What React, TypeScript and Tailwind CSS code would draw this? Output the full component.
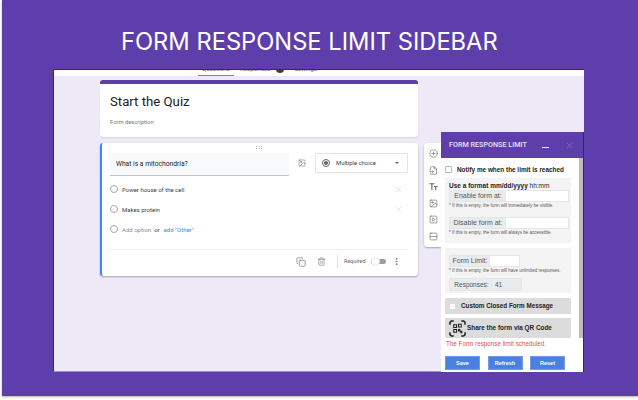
import { Copy, FileInput, Image, MoreVertical, CirclePlus, Rows2, SquarePlay, Trash2, X } from 'lucide-react';

function Radio() {
  return <span className="h-[8px] w-[8px] shrink-0 rounded-full border border-[#a8a8a8] bg-white" />;
}

function OptionRow({ label }: { label: string }) {
  return (
    <div className="flex h-[20px] items-center gap-[4px]">
      <Radio />
      <span className="text-[6px] text-[#3c4043]">{label}</span>
      <X className="ml-auto mr-[5px] h-[9px] w-[9px] text-[#c4c4c4]" strokeWidth={1.2} />
    </div>
  );
}

function DragDots() {
  return (
    <svg viewBox="0 0 6 3" className="absolute left-[154px] top-[3px] h-[3px] w-[6px]" fill="#b5b5b5">
      <path d="M0 0h1v1H0zM2.500 0h1v1h-1zM5 0h1v1H5zM0 2h1v1H0zM2.500 2h1v1h-1zM5 2h1v1H5z" />
    </svg>
  );
}

function FormCards() {
  return (
    <div className="ml-[46px] flex w-[318px] flex-col gap-[6px] font-['Roboto',sans-serif]">
      <div className="h-[57px] overflow-hidden rounded-[3px] border-t-[4px] border-[#5e3eab] bg-white pl-[10px] pt-[9px] shadow-[0_1px_1px_rgba(0,0,0,0.1)]">
        <div className="text-[13.200px] leading-[18px] text-[#202124]">Start the Quiz</div>
        <div className="mt-[7px] text-[5.800px] leading-[8px] text-[#70757a]">Form description</div>
      </div>
      <div className="relative h-[133px] rounded-[3px] border-l-[2px] border-[#4285f4] bg-white pl-[8px] pr-[10px] pt-[10px] shadow-[0_1px_2px_rgba(0,0,0,0.3)]">
        <DragDots />
        <div className="flex items-start">
          <div className="flex h-[23px] w-[179px] items-center border-b border-[#c4c6ca] bg-[#f8f9fa] pl-[6px] text-[6.700px] text-[#202124]">What is a mitochondria?</div>
          <Image className="ml-[9px] mt-[6px] h-[8px] w-[8px] text-[#5f6368]" strokeWidth={1.5} />
          <div className="ml-[9px] flex h-[20px] w-[93px] items-center rounded-[1px] border border-[#e4e4e4] pl-[6px] pr-[8px] text-[5.900px] text-[#3c4043]">
            <span className="flex h-[8px] w-[8px] items-center justify-center rounded-full border border-[#5f6368]">
              <span className="h-[4px] w-[4px] rounded-full bg-[#5f6368]" />
            </span>
            <span className="ml-[6px]">Multiple choice</span>
            <span className="ml-auto h-0 w-0 border-x-[2px] border-t-[2px] border-x-transparent border-t-[#5f6368]" />
          </div>
        </div>
        <div className="mt-[3px]">
          <OptionRow label="Power house of the cell" />
          <OptionRow label="Makes protein" />
          <div className="flex h-[20px] items-center gap-[3px] text-[6px]">
            <span className="mr-[1px] flex"><Radio /></span>
            <span className="text-[#8a8d91]">Add option</span>
            <span className="text-[#3c4043]">or</span>
            <span className="ml-[1px] text-[#4285f4]">add "Other"</span>
          </div>
        </div>
        <div className="mt-[10px] flex h-[24px] items-center border-t border-[#eeeeee]">
          <Copy className="ml-[186px] h-[10px] w-[10px] text-[#5f6368]" strokeWidth={1.4} />
          <Trash2 className="ml-[11px] h-[9px] w-[9px] text-[#5f6368]" strokeWidth={1.4} />
          <span className="ml-[11px] h-[13px] w-px bg-[#e2e2e2]" />
          <span className="ml-[6px] text-[5.500px] text-[#5f6368]">Required</span>
          <span className="relative ml-[5px] h-[5px] w-[15px] rounded-full bg-[#9e9e9e]">
            <span className="absolute left-0 top-[-2px] h-[9px] w-[9px] rounded-full border border-[#e4e4e4] bg-white" />
          </span>
          <MoreVertical className="ml-[6px] h-[9px] w-[9px] text-[#5f6368]" strokeWidth={2} />
        </div>
      </div>
    </div>
  );
}

function TitleIcon() {
  return (
    <svg viewBox="0 0 10 10" className="h-[9px] w-[9px]" fill="none" stroke="#5f6368" strokeWidth="1.200">
      <path d="M0.500 2H6M3.200 2v7M5.500 5h4M7.500 5v4" />
    </svg>
  );
}

function ToolRail() {
  return (
    <div className="absolute left-[370px] top-[73px] flex h-[104px] w-[18px] flex-col items-center justify-between rounded-l-[3px] bg-white py-[6px] shadow-[0_1px_2px_rgba(0,0,0,0.3)]">
      <CirclePlus className="h-[9px] w-[9px] text-[#5f6368]" strokeWidth={1.6} />
      <FileInput className="h-[9px] w-[9px] text-[#5f6368]" strokeWidth={1.6} />
      <TitleIcon />
      <Image className="h-[9px] w-[9px] text-[#5f6368]" strokeWidth={1.6} />
      <SquarePlay className="h-[9px] w-[9px] text-[#5f6368]" strokeWidth={1.6} />
      <Rows2 className="h-[9px] w-[9px] text-[#5f6368]" strokeWidth={1.6} />
    </div>
  );
}

function InputRow({ label, width, inputWidth }: { label: string; width: string; inputWidth: string }) {
  return (
    <div className={`flex h-[12px] border border-[#e6e6e6] ${width}`}>
      <span className="flex w-full items-center justify-center bg-[#e9ecef] text-[7px] text-[#555555]">{label}</span>
      <span className={`shrink-0 bg-white ${inputWidth}`} />
    </div>
  );
}

function Note({ text }: { text: string }) {
  return <p className="whitespace-nowrap text-[4.500px] leading-[6px] text-[#555555]">{text}</p>;
}

function QrMark() {
  return (
    <svg viewBox="0 0 18 18" className="h-[17px] w-[17px] shrink-0" fill="none" stroke="#222222" strokeWidth="1.100">
      <path d="M1 5V2.500L2.500 1H5M13 1h2.500L17 2.500V5M17 13v2.500L15.500 17H13M5 17H2.500L1 15.500V13" strokeWidth="1.600" />
      <path d="M5 5h3v3H5zM10 4.500h3v3h-3zM5 10h3v3H5zM10 10h1.500v1.500H10zM12.500 12h1v1.500h-1z" />
    </svg>
  );
}

function Sidebar() {
  return (
    <div className="absolute left-[387px] top-[62px] h-[240px] w-[143px] overflow-hidden border-r border-[#4a148c] bg-white font-['Liberation_Sans',sans-serif]">
      <div className="flex h-[26px] items-center bg-[#5e3eab] pl-[8px] font-['Roboto',sans-serif] text-[7.200px] font-medium text-[#e8e4f4]">
        <span className="w-[78px] whitespace-nowrap">FORM RESPONSE LIMIT</span>
        <span className="ml-[15px] mt-[5px] h-px w-[7px] bg-white" />
        <X className="ml-[16px] h-[9px] w-[9px] text-[#7a68a8]" strokeWidth={2.500} />
      </div>
      <div className="absolute right-0 top-[26px] h-[180px] w-[4px] bg-[#bdbdbd]" />
      <div className="pl-[4px] pr-[12px] pt-[8px]">
        <div className="flex items-center gap-[5px] whitespace-nowrap text-[6.400px] font-bold leading-[7px] text-[#222222]">
          <span className="h-[7px] w-[7px] rounded-[1px] border border-[#a9bce0] bg-white" />
          Notify me when the limit is reached
        </div>
        <div className="mt-[5px] h-[65px] bg-[#f5f4f5] px-[4px] pt-[4px]">
          <div className="whitespace-nowrap text-[6.500px] font-bold leading-[7px] text-[#222222]">
            Use a format mm/dd/yyyy <span className="font-normal">hh:mm</span>
          </div>
          <div className="mt-[1px]">
            <InputRow label="Enable form at:" width="w-[120px]" inputWidth="w-[62px]" />
          </div>
          <div className="mt-[1px]"><Note text="* If this is empty, the form will immediately be visible." /></div>
          <div className="mt-[8px]">
            <InputRow label="Disable form at:" width="w-[120px]" inputWidth="w-[62px]" />
          </div>
          <div className="mt-[1px]"><Note text="* If this is empty, the form will always be accessible." /></div>
        </div>
        <div className="mt-[5px] h-[45px] bg-[#f5f4f5] px-[4px] pt-[7px]">
          <InputRow label="Form Limit:" width="w-[71px]" inputWidth="w-[29px]" />
          <div className="mt-[1px]"><Note text="* If this is empty, the form will have unlimited responses." /></div>
          <div className="mt-[4px] flex h-[13px] w-[73px] border border-[#e6e6e6] bg-[#e9ecef] text-[6.500px] text-[#555555]">
            <span className="flex w-[44px] items-center justify-center border-r border-[#f5f4f5]">Responses:</span>
            <span className="flex items-center pl-[1px]">41</span>
          </div>
        </div>
        <div className="mt-[5px] flex h-[16px] items-center gap-[6px] whitespace-nowrap rounded-[1px] bg-[#dcdcdc] pl-[5px] text-[6.300px] font-bold text-[#222222]">
          <span className="h-[5px] w-[5px] bg-white" />
          Custom Closed Form Message
        </div>
        <div className="mt-[4px] flex h-[20px] items-center gap-px whitespace-nowrap rounded-[1px] bg-[#dcdcdc] pl-[4px] text-[6.400px] font-bold text-[#222222]">
          <QrMark />
          Share the form via QR Code
        </div>
        <div className="mt-[1px] whitespace-nowrap pl-px text-[6.300px] leading-[9px] text-[#d9534f]">The Form response limit scheduled.</div>
        <div className="mt-[8px] flex w-[120px] justify-between">
          {['Save', 'Refresh', 'Reset'].map(label => (
            <span key={label} className="flex h-[14px] w-[35px] items-center justify-center border border-[#6f9be8] bg-[#4a80e0] text-[5.500px] font-bold text-white">{label}</span>
          ))}
        </div>
      </div>
    </div>
  );
}

function TabBar() {
  return (
    <div className="flex h-[6px] overflow-hidden bg-white pl-[144px] font-['Roboto',sans-serif] text-[6.200px] leading-[8px] text-[#5f6368]">
      <div className="flex h-[6px] w-[36px] justify-center border-b border-[#8a7bb8]">
        <span className="mt-[-5px]">Questions</span>
      </div>
      <span className="ml-[6px] mt-[-5px]">Responses</span>
      <span className="ml-[6px] mt-[-5px] h-[8px] w-[8px] rounded-full bg-[#3c4043]" />
      <span className="ml-[10px] mt-[-5px]">Settings</span>
    </div>
  );
}

export default function App() {
  return (
    <div className="h-[400px] w-[638px] overflow-hidden bg-white pl-[2px]">
      <div className="h-[396px] bg-[#5e3eab] pt-[28px] shadow-[0_1px_2px_rgba(0,0,0,0.3)]">
        <h1 className="ml-[119px] h-[41px] whitespace-nowrap font-['Inter',sans-serif] text-[23.700px] leading-[28px] text-white">FORM RESPONSE LIMIT SIDEBAR</h1>
        <div className="relative ml-[51px] h-[303px] w-[531px] border-b border-l border-t border-b-[#9a8fc0] border-l-[#4a148c] border-t-[#4a148c] bg-[#ede9f6]">
          <TabBar />
          <div className="pt-[4px]">
            <FormCards />
          </div>
          <ToolRail />
          <Sidebar />
        </div>
      </div>
    </div>
  );
}
